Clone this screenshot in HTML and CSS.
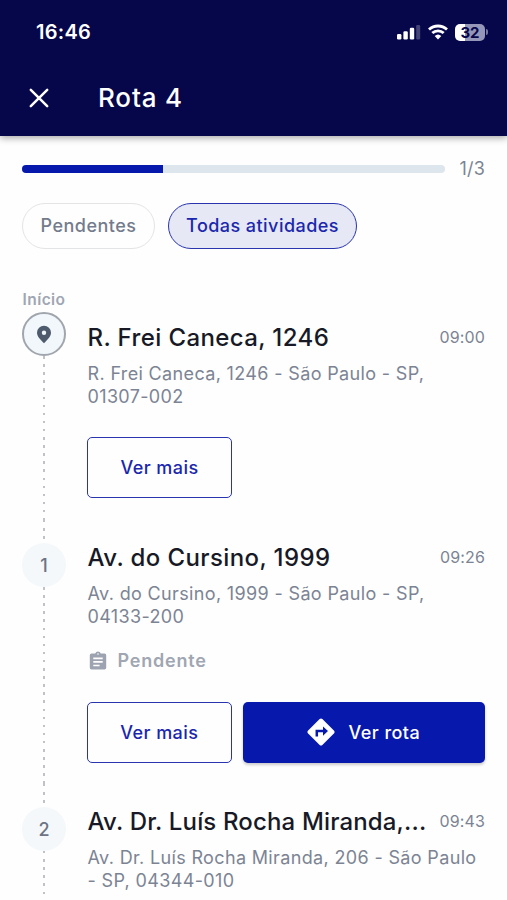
FILE: index.html
```html
<!DOCTYPE html>
<html lang="pt-BR">
<head>
<meta charset="utf-8">
<meta name="viewport" content="width=device-width, initial-scale=1">
<title>Rota 4</title>
<link rel="stylesheet" href="styles.css">
</head>
<body>
<header class="header">
  <div class="status">
    <span class="clock">16:46</span>
    <div class="status-icons">
      <svg class="signal" width="24" height="16" viewBox="0 0 24 16" fill="#fff"><rect x="0" y="10" width="4.4" height="5.5" rx="1.2"/><rect x="6.4" y="7.3" width="4.4" height="8.2" rx="1.2"/><rect x="12.8" y="3.8" width="4.4" height="11.7" rx="1.2"/><rect x="19.2" y="1" width="4" height="14.5" rx="1.2" opacity=".25"/></svg>
      <svg class="wifi" width="20" height="16" viewBox="0 0 20 16" fill="none" stroke="#fff" stroke-width="2.8"><path d="M1 5.6a13 13 0 0 1 18 0M4.3 9.1a8.2 8.2 0 0 1 11.4 0"/><path d="M10 15.5l-3.3-3.4a4.8 4.8 0 0 1 6.6 0z" fill="#fff" stroke="none"/></svg>
      <div class="battery"><span class="battery-level">32</span><i class="battery-tip"></i></div>
    </div>
  </div>
  <div class="toolbar">
    <svg width="20" height="20" viewBox="0 0 20 20" fill="none" stroke="#fff" stroke-width="2.5" stroke-linecap="round"><path d="M1.800 1.800l16.400 16.400M18.200 1.800L1.800 18.200"/></svg>
    <h1 class="title">Rota 4</h1>
  </div>
</header>
<main class="content">
  <div class="progress">
    <div class="track"><div class="fill"></div></div>
    <span class="count">1/3</span>
  </div>
  <div class="chips">
    <button class="chip">Pendentes</button>
    <button class="chip chip-active">Todas atividades</button>
  </div>
  <section class="step step-first">
    <div class="rail">
      <span class="rail-label">Início</span>
      <div class="marker marker-start"><svg width="16" height="19" viewBox="0 0 16 19" fill="#4e5b6c"><path fill-rule="evenodd" d="M8 .8A7 7 0 0 0 1 7.800C1 12 5.500 15.500 8 18.300 10.500 15.500 15 12 15 7.800A7 7 0 0 0 8 .8zM8 5.600a2.200 2.200 0 1 1 0 4.400 2.200 2.200 0 0 1 0-4.400z"/></svg></div>
      <div class="dots"></div>
    </div>
    <div class="info">
      <div class="heading"><h2 class="name">R. Frei Caneca, 1246</h2><time class="time">09:00</time></div>
      <p class="address">R. Frei Caneca, 1246 - São Paulo - SP,<br>01307-002</p>
      <div class="actions"><button class="btn">Ver mais</button></div>
    </div>
  </section>
  <section class="step step-second">
    <div class="rail">
      <div class="dots dots-lead"></div>
      <div class="marker">1</div>
      <div class="dots"></div>
    </div>
    <div class="info">
      <div class="heading"><h2 class="name">Av. do Cursino, 1999</h2><time class="time">09:26</time></div>
      <p class="address">Av. do Cursino, 1999 - São Paulo - SP,<br>04133-200</p>
      <div class="state"><svg width="18" height="19" viewBox="0 0 18 19"><path fill="#9da3b1" d="M2.500 2.500h3.700a3 3 0 0 1 5.600 0h3.700A1.700 1.700 0 0 1 17.200 4.200v12.600a1.700 1.700 0 0 1-1.700 1.700h-13A1.700 1.700 0 0 1 .8 16.800V4.200A1.700 1.700 0 0 1 2.500 2.500z"/><path d="M4.300 7.300h9.400M4.300 10.900h9.400M4.300 14.500h6.300" stroke="#fff" stroke-width="1.700"/><circle cx="9" cy="3" r=".8" fill="#fff"/></svg><span>Pendente</span></div>
      <div class="actions">
        <button class="btn">Ver mais</button>
        <button class="btn btn-primary"><svg width="28" height="28" viewBox="0 0 28 28"><path fill="#fff" d="M12.600 1.100a2 2 0 0 1 2.800 0l11.500 11.500a2 2 0 0 1 0 2.800L15.400 26.900a2 2 0 0 1-2.800 0L1.100 15.400a2 2 0 0 1 0-2.800z"/><path d="M9.800 18.400v-5.300h7" fill="none" stroke="#0718ad" stroke-width="2.500"/><path d="M16 8.500l5 4.600-5 4.600z" fill="#0718ad"/></svg><span>Ver rota</span></button>
      </div>
    </div>
  </section>
  <section class="step step-third">
    <div class="rail">
      <div class="dots dots-lead"></div>
      <div class="marker">2</div>
      <div class="dots"></div>
    </div>
    <div class="info">
      <div class="heading"><h2 class="name name-long">Av. Dr. Luís Rocha Miranda,...</h2><time class="time">09:43</time></div>
      <p class="address">Av. Dr. Luís Rocha Miranda, 206 - São Paulo<br>- SP, 04344-010</p>
    </div>
  </section>
</main>
</body>
</html>
```
FILE: styles.css
```css
* { box-sizing: border-box; margin: 0; padding: 0; }
body { height: 900px; overflow: hidden; background: #fefefe; font-family: Inter, "Liberation Sans", sans-serif; color: #171a26; }
svg { display: block; flex: none; }
button { font: inherit; }
.header { height: 136px; background: #06064a; color: #fff; box-shadow: 0 2px 7px rgba(0, 0, 0, .35); }
.status { height: 64px; padding: 0 19px 0 36px; display: flex; align-items: center; justify-content: space-between; }
.clock { font-size: 20px; font-weight: 600; letter-spacing: .25px; }
.status-icons { display: flex; align-items: center; gap: 7px; }
.battery { display: flex; align-items: center; gap: 1px; }
.battery-level { width: 30px; height: 17px; border-radius: 5px; background: linear-gradient(90deg, #fff 10px, #9696b9 10px); color: #06064a; font-size: 15px; line-height: 17px; font-weight: 700; text-align: center; }
.battery-tip { width: 2px; height: 6px; border-radius: 0 2px 2px 0; background: #7777a0; }
.toolbar { height: 68px; padding-left: 29px; display: flex; align-items: center; gap: 49px; }
.title { font-size: 26px; font-weight: 500; letter-spacing: .85px; line-height: 30px; padding-bottom: 1px; }
.content { padding: 0 22px; }
.progress { height: 66px; display: flex; align-items: center; justify-content: space-between; }
.track { width: 423px; height: 8px; border-radius: 4px; background: #dde5ed; overflow: hidden; }
.fill { width: 141px; height: 8px; background: #0718ad; }
.count { font-size: 18px; color: #7c8494; letter-spacing: .2px; padding-bottom: 2px; }
.chips { display: flex; gap: 13px; padding-top: 1px; }
.chip { height: 46px; width: 133px; padding-bottom: 1px; border: 1.500px solid #e2e4e6; border-radius: 23px; background: #fefefe; color: #737b8c; font-size: 18px; font-weight: 500; letter-spacing: .5px; white-space: nowrap; }
.chip-active { width: 189px; background: #e6e8f5; border-color: #2a34ae; color: #1a27ad; letter-spacing: .45px; }
.step { display: flex; gap: 21.500px; }
.step-first { height: 230px; margin-top: 41px; }
.step-second { height: 264px; }
.step-third { height: 116px; }
.rail { width: 44px; flex: none; display: flex; flex-direction: column; align-items: center; }
.rail-label { height: 22px; line-height: 20px; font-size: 15.500px; font-weight: 600; letter-spacing: .4px; color: #a0a6b2; white-space: nowrap; }
.marker { width: 44px; height: 44px; flex: none; border-radius: 50%; background: #f4f8fa; color: #6c7485; font-size: 18px; font-weight: 500; display: flex; align-items: center; justify-content: center; }
.marker-start { border: 2.500px solid #a1a6ae; background: #f1f7fb; }
.dots { width: 2px; flex: 1; background: repeating-linear-gradient(180deg, #bfc3c9 0 2.500px, transparent 2.500px 8.100px); }
.dots-lead { flex: none; height: 23px; }
.info { flex: 1; min-width: 0; padding-top: 21px; }
.step-first .info { padding-top: 31px; }
.heading { display: flex; align-items: center; justify-content: space-between; height: 32px; white-space: nowrap; }
.name { font-size: 24px; font-weight: 450; letter-spacing: .38px; }
.name-long { letter-spacing: .15px; }
.time { font-size: 16px; color: #7c8494; letter-spacing: .15px; }
.address { margin-top: 9px; font-size: 18px; line-height: 23px; color: #7c8494; letter-spacing: .35px; white-space: nowrap; }
.state { margin-top: 20px; height: 24px; padding-left: 1px; display: flex; align-items: center; gap: 11px; color: #a0a6b2; font-size: 18px; font-weight: 600; letter-spacing: .8px; }
.actions { margin-top: 30px; display: flex; gap: 11px; margin-left: -.5px; }
.step-first .actions { margin-top: 29px; }
.btn { width: 145px; height: 61px; padding-bottom: 1px; border: 1.500px solid #2a34ae; border-radius: 5px; background: #fefefe; color: #1a27ad; font-size: 18px; font-weight: 500; letter-spacing: .45px; }
.btn-primary { width: 243px; border: 0; background: #0718ad; color: #fff; display: flex; align-items: center; justify-content: center; gap: 13px; box-shadow: 0 2px 3px rgba(0, 0, 0, .2); }
```
